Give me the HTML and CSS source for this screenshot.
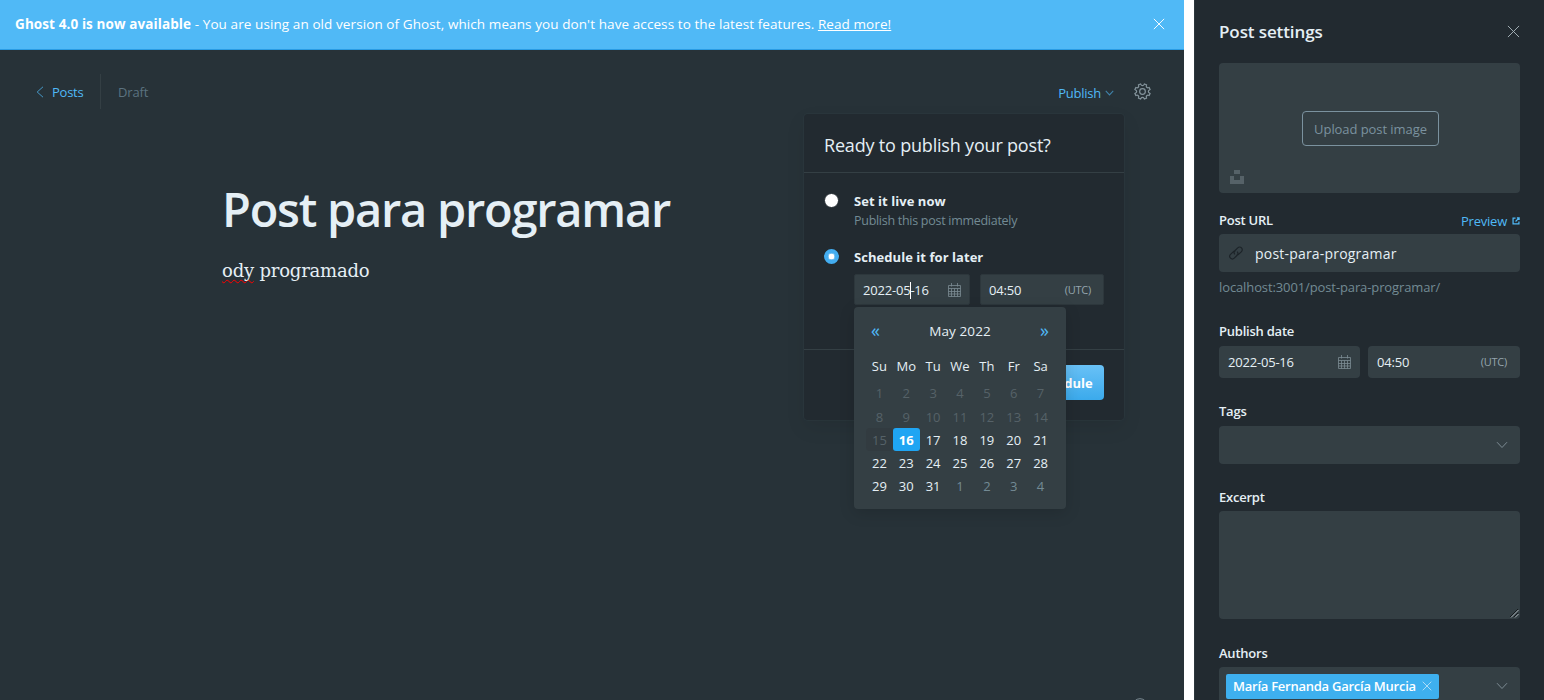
FILE: index.html
```html
<!DOCTYPE html>
<html lang="es">
<head>
<meta charset="utf-8">
<title>Post para programar</title>
<link rel="stylesheet" href="styles.css">
</head>
<body>
<svg class="defs" width="0" height="0">
  <symbol id="close" viewBox="0 0 14 14"><path d="M1 1l12 12M13 1L1 13"/></symbol>
  <symbol id="down" viewBox="0 0 12 8"><path d="M1 1.2l5 5.3 5-5.3"/></symbol>
  <symbol id="calendar" viewBox="0 0 14 14"><path d="M.5 2.500h12v11H.5zM.5 5.500h12M.5 8.500h12M.5 11h12M3.500 5.500v8M6.500 5.500v8M9.500 5.500v8M3.500 0v3.500M9.500 0v3.500"/></symbol>
</svg>
<div class="app">
  <main class="main">
    <div class="banner">
      <p class="banner-text"><b class="t-strong">Ghost 4.0 is now available</b><span class="t-rest"> - You are using an old version of Ghost, which means you don't have access to the latest features. <a class="more">Read more!</a></span></p>
      <svg class="ico banner-close"><use href="#close"/></svg>
    </div>
    <header class="toolbar">
      <a class="back"><svg class="ico back-ico" viewBox="0 0 8 12"><path d="M7 .8L1.2 6 7 11.2"/></svg><span class="t-posts">Posts</span></a>
      <span class="status">Draft</span>
      <div class="actions">
        <a class="publish"><span class="t-publish">Publish</span><svg class="ico publish-ico"><use href="#down"/></svg></a>
        <svg class="ico gear" viewBox="0 0 24 24"><circle cx="12" cy="12" r="4"/><path d="M9.8 2.3a2.4 2.4 0 0 0 4.4 0l.5-1 3 1.200-.3 1.200a2.400 2.400 0 0 0 2.900 3l1.100-.4 1.300 3-1 .5a2.400 2.400 0 0 0 0 4.400l1 .5-1.300 3-1.100-.4a2.400 2.400 0 0 0-2.900 3l.3 1.200-3 1.200-.5-1a2.400 2.400 0 0 0-4.400 0l-.5 1-3-1.200.3-1.200a2.400 2.400 0 0 0-2.900-3l-1.100.4-1.300-3 1-.5a2.400 2.400 0 0 0 0-4.400l-1-.5 1.300-3 1.100.4a2.400 2.400 0 0 0 2.900-3l-.3-1.200 3-1.200z"/></svg>
      </div>
    </header>
    <article class="editor">
      <h1 class="title">Post para programar</h1>
      <p class="body"><span class="misspelled">ody</span> programado</p>
    </article>
    <svg class="ico help" viewBox="0 0 16 16"><circle cx="8" cy="8" r="7.300"/></svg>

    <section class="dialog">
      <h2 class="dialog-head"><span class="t-ready">Ready to publish your post?</span></h2>
      <div class="dialog-body">
        <div class="option live">
          <i class="radio"></i>
          <div><strong class="t-live">Set it live now</strong><small class="t-immed">Publish this post immediately</small></div>
        </div>
        <div class="option">
          <i class="radio on"></i>
          <div><strong class="t-later">Schedule it for later</strong>
            <div class="when">
              <div class="field date"><span class="t-date">2022-05<i class="caret"></i>-16</span><svg class="ico cal"><use href="#calendar"/></svg></div>
              <div class="field time"><span class="t-time">04:50</span><small class="utc">(UTC)</small></div>
            </div>
          </div>
        </div>
      </div>
      <div class="dialog-foot"><button class="schedule">Schedule</button></div>
      <div class="picker">
        <nav class="picker-nav"><a>«</a><span class="month">May 2022</span><a>»</a></nav>
        <div class="grid week"><span>Su</span><span>Mo</span><span>Tu</span><span>We</span><span>Th</span><span>Fr</span><span>Sa</span></div>
        <div class="grid days">
          <span class="off">1</span><span class="off">2</span><span class="off">3</span><span class="off">4</span><span class="off">5</span><span class="off">6</span><span class="off">7</span>
          <span class="off">8</span><span class="off">9</span><span class="off">10</span><span class="off">11</span><span class="off">12</span><span class="off">13</span><span class="off">14</span>
          <span class="off today">15</span><span class="sel">16</span><span>17</span><span>18</span><span>19</span><span>20</span><span>21</span>
          <span>22</span><span>23</span><span>24</span><span>25</span><span>26</span><span>27</span><span>28</span>
          <span>29</span><span>30</span><span>31</span><span class="next">1</span><span class="next">2</span><span class="next">3</span><span class="next">4</span>
        </div>
      </div>
    </section>
  </main>

  <aside class="settings">
    <header class="settings-head"><h3 class="t-settings">Post settings</h3><svg class="ico settings-close"><use href="#close"/></svg></header>
    <div class="upload">
      <button class="upload-btn">Upload post image</button>
      <svg class="unsplash" viewBox="0 0 14 14"><path d="M4 0h6v4H4zM0 6h4v4h6V6h4v8H0z"/></svg>
    </div>
    <div class="row first"><label class="t-url">Post URL</label>
      <a class="preview"><span class="t-preview">Preview</span><svg class="ico ext" viewBox="0 0 9 9"><path d="M4 1.200H1.200v6.600h6.600V5M5.500 1h2.500v2.500M8 1L4 5"/></svg></a></div>
    <div class="input url"><svg class="ico link" viewBox="0 0 24 24"><path d="M10 14.500a4.500 4.500 0 0 1 0-6.400l5-5a4.500 4.500 0 0 1 6.400 6.400l-5 5a4.500 4.500 0 0 1-4 1.200M14 9.500a4.500 4.500 0 0 1 0 6.400l-5 5a4.500 4.500 0 0 1-6.400-6.400l5-5a4.500 4.500 0 0 1 4-1.200"/></svg><span class="t-slug">post-para-programar</span></div>
    <p class="hint"><span class="t-hint">localhost:3001/post-para-programar/</span></p>
    <div class="row r-date"><label class="t-pdate">Publish date</label></div>
    <div class="dates">
      <div class="input d"><span class="t-date">2022-05-16</span><svg class="ico cal"><use href="#calendar"/></svg></div>
      <div class="input t"><span class="t-time">04:50</span><small class="utc">(UTC)</small></div>
    </div>
    <div class="row r-tags"><label class="t-tags">Tags</label></div>
    <div class="input select"><svg class="ico chev"><use href="#down"/></svg></div>
    <div class="row"><label class="t-excerpt">Excerpt</label></div>
    <div class="input area"><svg class="ico grip" viewBox="0 0 9 9"><path class="dark" d="M0 8L8 0M4 8l4-4"/><path d="M1 8.500L8.500 1M5 8.500L8.500 5"/></svg></div>
    <div class="row r-authors"><label class="t-authors">Authors</label></div>
    <div class="input select authors"><span class="token"><span class="t-token">María Fernanda García Murcia</span><svg class="ico token-x"><use href="#close"/></svg></span><svg class="ico chev"><use href="#down"/></svg></div>
  </aside>
</div>
</body>
</html>
```
FILE: styles.css
```css
* { box-sizing: border-box; margin: 0; padding: 0; }
body { height: 700px; overflow: hidden; background: #fff; color: #e5eff5; font: 13px/18px "Open Sans", "Noto Sans", sans-serif; }
.defs { position: absolute; }
.app { display: flex; gap: 10px; height: 700px; overflow: hidden; }
.ico { display: block; flex: none; fill: none; stroke: currentColor; stroke-width: 1; overflow: visible; }
span, label, b, strong, small, a { white-space: nowrap; }
button { font: inherit; white-space: nowrap; }

.main { position: relative; width: 1184px; height: 700px; background: #273238; overflow: hidden; }
.banner { display: flex; align-items: center; justify-content: space-between; height: 50px; padding: 0 19px 2px 15px; background: #50b9f6; border-bottom: 1px solid #2a9ce4; color: #fff; }
.banner-text { font-size: 13.5px; letter-spacing: .09px; }
.banner-close { width: 12px; height: 12px; stroke-width: 1.1; }
.t-strong { font-weight: 700; letter-spacing: .1px; }
.more { text-decoration: underline; }

.toolbar { display: flex; align-items: center; height: 35px; margin: 24px 33px 0 36px; }
.back { display: flex; align-items: center; gap: 8px; height: 35px; width: 65px; border-right: 1px solid #343f44; color: #50b9f6; }
.t-posts, .t-publish, .status { letter-spacing: -.17px; }
.t-posts, .t-publish { font-weight: 500; letter-spacing: -.25px; }
.back-ico { width: 8px; height: 12px; opacity: .75; }
.status { margin-left: 17px; color: #5b7280; }
.actions { display: flex; align-items: center; gap: 20px; margin-left: auto; }
.publish { display: flex; align-items: center; gap: 4px; padding-top: 2px; color: #50b9f6; }
.publish-ico { width: 9px; height: 6px; opacity: .6; stroke-width: 1.4; }
.gear { width: 17px; height: 17px; color: #84949c; stroke-width: 1.7; }

.editor { padding: 68px 0 0 222px; }
.title { font-size: 47px; line-height: 64px; font-weight: 600; letter-spacing: -1.25px; white-space: nowrap; }
.body { margin-top: 16px; font: 18px/28px "DejaVu Serif", serif; letter-spacing: -.2px; white-space: nowrap; }
.misspelled { text-decoration: underline wavy #f00 1px; text-decoration-skip-ink: none; text-underline-offset: 2px; }
.help { position: absolute; left: 1132px; top: 698px; width: 16px; height: 16px; color: #7c8b93; }

.dialog { position: absolute; left: 804px; top: 114px; width: 320px; height: 306px; background: #222a30; border-radius: 4px; box-shadow: 0 0 0 1px rgba(50,64,70,.35), 0 8px 20px rgba(0,0,0,.08); }
.dialog-head { height: 59px; padding: 17px 20px 0; border-bottom: 1px solid #343f44; font-size: 18px; line-height: 28px; font-weight: 400; letter-spacing: -.19px; }
.dialog-body { height: 177px; padding: 19px 20px 0; border-bottom: 1px solid #343f44; }
.option { display: flex; gap: 15px; }
.option > div { display: flex; flex-direction: column; align-items: flex-start; }
.live { height: 56px; }
.option strong { line-height: 19px; font-weight: 700; letter-spacing: .05px; }
.option .t-immed { font-size: 12.5px; line-height: 19px; letter-spacing: -.28px; color: #738a94; }
.radio { flex: none; width: 15px; height: 15px; margin-top: 1px; border: 1px solid #222a30; border-radius: 50%; background: #fff; }
.on { border: 4px solid #43adf0; box-shadow: inset 0 0 0 .5px #2a9ce4; }
.when { display: flex; gap: 10px; margin-top: 7px; }
.field { display: flex; align-items: center; justify-content: space-between; height: 31px; border: 1px solid #2d373c; border-radius: 2px; background: #343f44; }
.field.date { width: 116px; padding: 0 7px 0 8px; }
.field.time { width: 124px; padding: 0 12px 0 8px; }
.t-date, .t-time { font-weight: 500; letter-spacing: -.2px; }
.utc { font-size: 11px; letter-spacing: -.25px; color: #95a5ad; }
.cal { width: 14px; height: 14px; color: #7c8b93; stroke-width: .8; }
.caret { display: inline-block; width: 1px; height: 17px; margin-right: -1px; background: #fff; vertical-align: -4px; }
.dialog-foot { display: flex; justify-content: flex-end; padding: 15px 20px; }
.schedule { width: 81px; height: 35px; border: 0; border-radius: 4px; background: linear-gradient(#69c1f6, #3baaec); color: #fff; font-weight: 700; }

.picker { position: absolute; left: 50px; top: 193px; width: 212px; height: 202px; padding: 10px 12px 12px; border-radius: 4px; background: #343f44; box-shadow: 0 4px 16px rgba(0,0,0,.14); font-weight: 500; }
.picker-nav { display: flex; align-items: center; justify-content: space-between; height: 28px; padding: 0 5px; }
.picker-nav a { color: #50b9f6; font-size: 18px; line-height: 24px; padding-bottom: 3px; }
.month { font-size: 13.5px; letter-spacing: .1px; }
.grid { display: grid; grid-template-columns: repeat(7, 1fr); text-align: center; }
.grid span { line-height: 23px; }
.week { height: 36px; padding-top: 10px; }
.days { grid-template-rows: 24px 23px 23px 23px 23px; }
.days span { padding-top: 2px; line-height: 21px; }
.off { color: #566268; }
.today { border-radius: 4px; background: #323b40; }
.days .sel { border-radius: 3px; background: #1fa5f3; color: #fff; font-weight: 700; }
.next { color: #738a94; }

.settings { width: 350px; height: 700px; padding: 0 24px; border-left: 1px solid #2c363c; background: #222a30; overflow: hidden; }
.settings-head { display: flex; align-items: center; justify-content: space-between; height: 63px; }
.t-settings { font-size: 17px; font-weight: 600; letter-spacing: -.1px; }
.settings-close { width: 13px; height: 13px; color: #aab7bd; }
.upload { position: relative; display: flex; align-items: center; justify-content: center; height: 130px; padding-left: 2px; border-radius: 4px; background: #343f44; }
.upload-btn { width: 137px; height: 35px; padding-top: 2px; border: 1px solid #7b929f; border-radius: 4px; background: none; color: #7b929f; letter-spacing: -.07px; }
.unsplash { position: absolute; left: 11px; bottom: 9px; width: 14px; height: 14px; fill: #566268; }
.row { display: flex; justify-content: space-between; height: 18px; margin: 24px 0 5px; font-weight: 600; letter-spacing: -.23px; }
.first { margin-top: 18px; }
.r-date { margin-bottom: 6px; }
.r-tags { margin: 24px 0 6px; }
.r-authors { margin-top: 25px; }
.preview { display: flex; align-items: center; gap: 5px; padding-top: 2px; color: #50b9f6; font-weight: 400; }
.ext { width: 8px; height: 8px; stroke-width: 1.4; }
.input { display: flex; align-items: center; justify-content: space-between; height: 38px; border-radius: 4px; background: #343f44; }
.url { justify-content: flex-start; gap: 12px; padding: 0 10px; font-size: 14px; }
.t-slug { padding-top: 2px; letter-spacing: .2px; }
.link { width: 14px; height: 14px; color: #1c2328; stroke-width: 2; }
.hint { height: 20px; margin-top: 6px; line-height: 18px; color: #738a94; letter-spacing: -.11px; }
.dates { display: flex; gap: 8px; }
.dates .input { height: 32px; }
.d { width: 141px; padding: 0 8px 0 9px; }
.t { width: 152px; padding: 0 13px 0 9px; }
.select { padding: 0 12px; }
.chev { width: 12px; height: 8px; margin: 0 0 1px auto; color: #7c8b93; }
.area { height: 108px; align-items: flex-end; justify-content: flex-end; padding: 1px; }
.grip { width: 9px; height: 9px; color: #aeb8bd; }
.dark { stroke: #14191c; }
.authors { padding-left: 7px; }
.token { display: flex; align-items: center; gap: 6px; width: 213px; height: 25px; padding-left: 7px; border-radius: 2px; background: #3eb0ef; color: #fff; font-weight: 600; letter-spacing: -.25px; }
.token-x { width: 10px; height: 10px; opacity: .8; }
```
